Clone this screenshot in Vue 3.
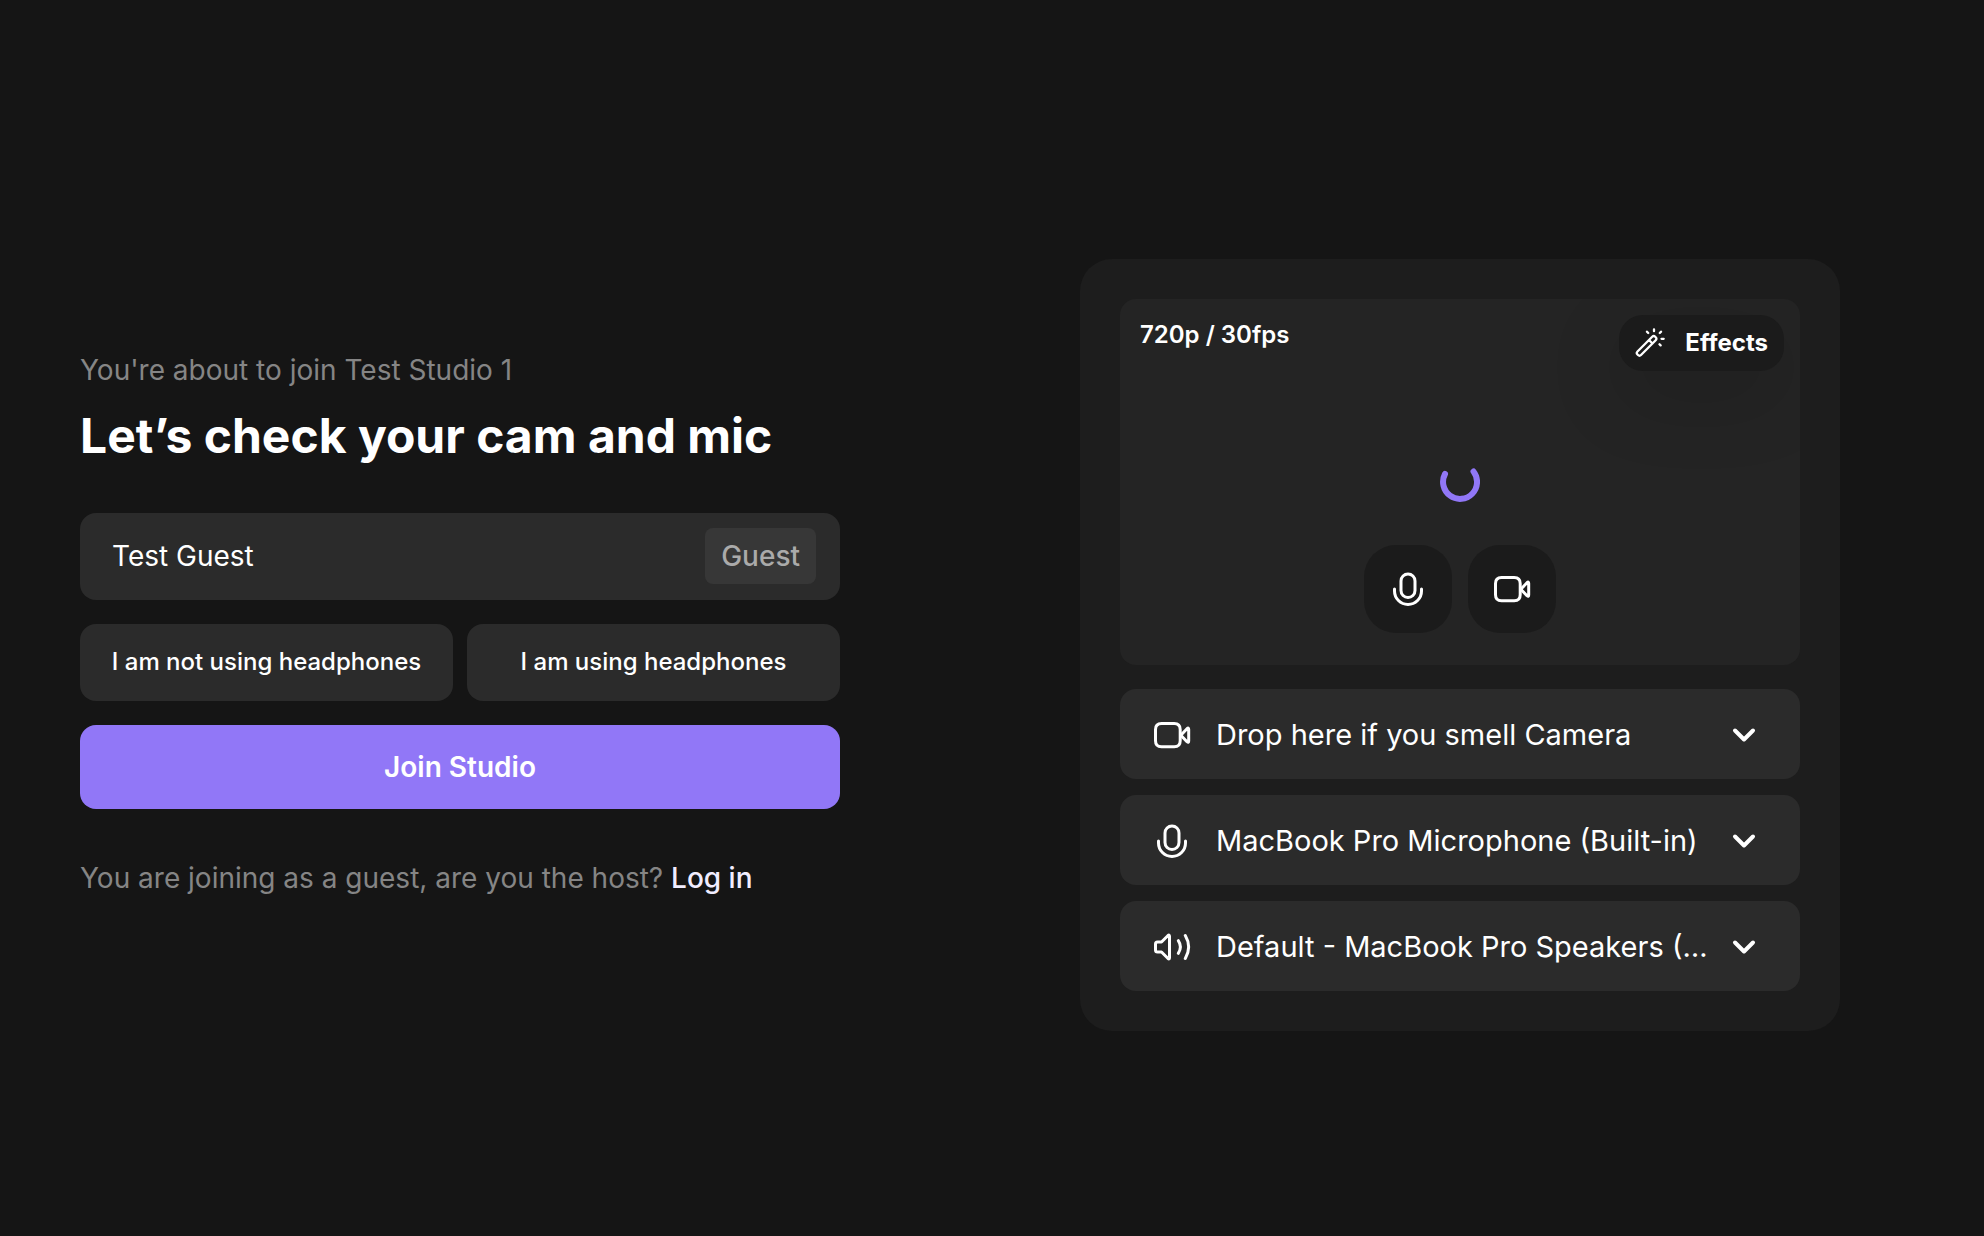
<script setup>
import { ref } from 'vue'

const guestName = ref('Test Guest')

const devices = ref([
  { id: 'camera', label: 'Camera', icon: 'camera', value: 'Drop here if you smell Camera' },
  { id: 'microphone', label: 'Microphone', icon: 'mic', value: 'MacBook Pro Microphone (Built-in)' },
  { id: 'speaker', label: 'Speaker', icon: 'speaker', value: 'Default - MacBook Pro Speakers (Built-in)' },
])

const icons = {
  camera: ['M9.500 8.500H22.200Q28.200 8.500 28.200 14.500V25.800Q28.200 31.800 22.200 31.800H9.500Q3.500 31.800 3.500 25.800V14.500Q3.500 8.500 9.500 8.500Z', 'M28.800 20.200L35 13.700Q36.700 12.300 36.700 14.300V26.100Q36.700 28.100 35 26.700Z'],
  mic: ['M20 5A7 7 0 0 1 27 12V21.500A7 7 0 0 1 13 21.500V12A7 7 0 0 1 20 5Z', 'M6.500 20V22A13.500 13.500 0 0 0 33.500 22V20'],
  speaker: ['M3.500 17Q3.500 15 5.500 15H9.500L15.800 8.700Q17.500 7.300 17.500 9.300V30.700Q17.500 32.700 15.800 31.300L9.500 25H5.500Q3.500 25 3.500 23Z', 'M26.300 13.700Q30.500 20 26.300 26.300', 'M33.300 8.500Q40 20 33.300 31.500'],
}
</script>

<template>
  <main class="lobby">
    <section class="intro">
      <p class="muted">You're about to join Test Studio 1</p>
      <h1>Let’s check your cam and mic</h1>
      <form class="form" @submit.prevent>
        <div class="name">
          <input v-model="guestName" type="text" aria-label="Your name" />
          <span class="role">Guest</span>
        </div>
        <div class="choices">
          <button type="button">I am not using headphones</button>
          <button type="button">I am using headphones</button>
        </div>
        <button class="join" type="submit">Join Studio</button>
      </form>
      <p class="muted">You are joining as a guest, are you the host? <a href="#login">Log in</a></p>
    </section>

    <section class="card" aria-label="Devices">
      <div class="preview">
        <div class="top">
          <span class="quality">720p / 30fps</span>
          <button class="effects" type="button">
            <svg width="32" height="32" viewBox="0 0 32 32" aria-hidden="true">
              <path d="M2.500 24.500L17.200 9.800Q18.700 8.300 20.200 9.800L20.700 10.300Q22.200 11.800 20.700 13.300L6 28Q4.500 29.500 3 28L2.500 27.500Q1 26 2.500 24.500ZM14 13L17.500 16.500M19 2.300V4.200M12 4.700L13.200 6M26 4.700L24.800 6M26.500 11.800H28.700M24.500 17.300L25.600 18.400" />
            </svg>
            Effects
          </button>
        </div>
        <div class="loading" role="status" aria-label="Loading">
          <svg width="40" height="40" viewBox="0 0 40 40">
            <path d="M5 12A17 17 0 1 0 33.500 9.500" />
          </svg>
        </div>
        <div class="controls">
          <button type="button" aria-label="Toggle microphone">
            <svg class="icon" viewBox="0 0 40 40"><path v-for="d in icons.mic" :key="d" :d="d" /></svg>
          </button>
          <button type="button" aria-label="Toggle camera">
            <svg class="icon" viewBox="0 0 40 40"><path v-for="d in icons.camera" :key="d" :d="d" /></svg>
          </button>
        </div>
      </div>

      <div class="devices">
        <label v-for="device in devices" :key="device.id" class="device" :for="device.id">
          <svg class="icon" viewBox="0 0 40 40" aria-hidden="true">
            <path v-for="d in icons[device.icon]" :key="d" :d="d" />
          </svg>
          <select :id="device.id" v-model="device.value" :aria-label="device.label">
            <option>{{ device.value }}</option>
          </select>
          <svg class="chevron" viewBox="0 0 24 24" aria-hidden="true"><path d="M3 7.500L12 16.500L21 7.500" /></svg>
        </label>
      </div>
    </section>
  </main>
</template>

<style>
body {
  background: #151515;
}
</style>

<style scoped>
.lobby {
  box-sizing: border-box;
  display: grid;
  grid-template-columns: minmax(0, 1fr) minmax(0, 1fr);
  gap: 240px;
  align-items: start;
  min-height: 100vh;
  padding: 259px 144px 100px 80px;
  color: #fff;
  font-family: Inter, "Liberation Sans", sans-serif;
  font-size: 28px;
  line-height: 38px;
}

.intro {
  padding-top: 92px;
}

p,
h1 {
  margin: 0;
}

h1 {
  margin: 18px 0 48px;
  font-size: 48px;
  font-weight: 700;
  line-height: 58px;
}

.muted {
  color: #858585;
}

a {
  color: #f1edff;
  font-weight: 500;
  text-decoration: none;
}

button,
input,
select {
  border: 0;
  color: inherit;
  font: inherit;
}

button {
  padding: 0;
  cursor: pointer;
}

.form {
  display: flex;
  flex-direction: column;
  gap: 24px;
  margin-bottom: 50px;
}

.name {
  display: flex;
  align-items: center;
  box-sizing: border-box;
  height: 87px;
  padding: 0 24px 2px 32px;
  border-radius: 16px;
  background: #2b2b2b;
}

.name input {
  flex: 1;
  min-width: 0;
  padding: 0;
  outline: 0;
  background: none;
}

.role {
  padding: 9px 16px;
  border-radius: 8px;
  background: #373737;
  color: #aaa;
  font-weight: 500;
}

.choices {
  display: grid;
  grid-template-columns: 1fr 1fr;
  gap: 14px;
}

.choices button {
  height: 77px;
  padding-bottom: 2px;
  border-radius: 16px;
  background: #2b2b2b;
  font-size: 24px;
  font-weight: 500;
}

.join {
  height: 84px;
  border-radius: 16px;
  background: #9177f7;
  font-weight: 600;
}

.card {
  padding: 40px;
  border-radius: 32px;
  background: #1d1d1d;
}

.preview {
  position: relative;
  display: flex;
  flex-direction: column;
  justify-content: space-between;
  box-sizing: border-box;
  min-height: 366px;
  padding: 16px 16px 32px;
  border-radius: 16px;
  background: #242424;
  overflow: hidden;
}

.top {
  display: flex;
  justify-content: space-between;
  align-items: flex-start;
  padding-left: 4px;
  font-size: 24px;
  font-weight: 600;
}

.quality {
  line-height: 40px;
}

.effects {
  display: flex;
  align-items: center;
  gap: 18px;
  height: 56px;
  padding: 0 16px;
  border-radius: 24px;
  background: #1b1b1b;
  box-shadow: 0 24px 80px rgba(0, 0, 0, 0.16);
  font-weight: 700;
}

.effects svg {
  fill: none;
  stroke: #fff;
  stroke-width: 2.300;
  stroke-linecap: round;
  stroke-linejoin: round;
}

.loading {
  position: absolute;
  inset: 0;
  display: grid;
  place-items: center;
  pointer-events: none;
}

.loading path {
  fill: none;
  stroke: #9177f7;
  stroke-width: 6;
  stroke-linecap: round;
}

.controls {
  display: flex;
  justify-content: center;
  gap: 16px;
}

.controls button {
  display: grid;
  place-items: center;
  width: 88px;
  height: 88px;
  border-radius: 32px;
  background: #1b1b1b;
}

.icon {
  flex: none;
  width: 40px;
  height: 40px;
  fill: none;
  stroke: #fff;
  stroke-width: 3;
  stroke-linecap: round;
  stroke-linejoin: round;
}

.devices {
  display: flex;
  flex-direction: column;
  gap: 16px;
  margin-top: 24px;
}

.device {
  display: flex;
  align-items: center;
  gap: 24px;
  box-sizing: border-box;
  height: 90px;
  padding: 2px 44px 0 32px;
  border-radius: 16px;
  background: #2b2b2b;
}

select {
  flex: 1;
  min-width: 0;
  padding: 0;
  outline: 0;
  background: none;
  font-size: 29px;
  appearance: none;
  text-overflow: ellipsis;
  white-space: nowrap;
  overflow: hidden;
}

.chevron {
  flex: none;
  width: 24px;
  height: 24px;
  fill: none;
  stroke: #fff;
  stroke-width: 4;
  stroke-linecap: round;
  stroke-linejoin: round;
}
</style>
